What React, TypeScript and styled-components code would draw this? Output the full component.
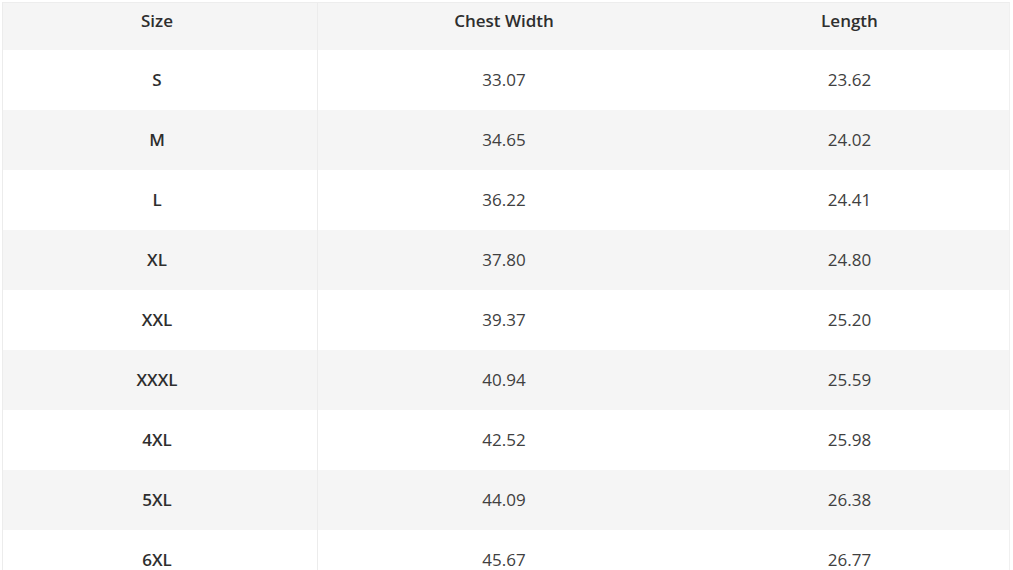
import styled, { createGlobalStyle } from 'styled-components';

const rows = [
  ['S', '33.07', '23.62'],
  ['M', '34.65', '24.02'],
  ['L', '36.22', '24.41'],
  ['XL', '37.80', '24.80'],
  ['XXL', '39.37', '25.20'],
  ['XXXL', '40.94', '25.59'],
  ['4XL', '42.52', '25.98'],
  ['5XL', '44.09', '26.38'],
  ['6XL', '45.67', '26.77'],
];

function App() {
  return (
    <>
      <GlobalStyle />
      <Page>
        <Table>
          <HeaderRow>
            <HeadCell>Size</HeadCell>
            <HeadCell>Chest Width</HeadCell>
            <HeadCell>Length</HeadCell>
          </HeaderRow>
          {rows.map(([size, chest, length], i) => (
            <Row key={size} $striped={i % 2 === 1}>
              <SizeCell>{size}</SizeCell>
              <Cell>{chest}</Cell>
              <Cell>{length}</Cell>
            </Row>
          ))}
        </Table>
      </Page>
    </>
  );
}

const GlobalStyle = createGlobalStyle`
  body {
    margin: 0;
    background: #fff;
    font-family: 'Open Sans', 'Liberation Sans', sans-serif;
    color: #3a3a3a;
    overflow: hidden;
  }
`;

const Page = styled.div`
  padding: 2px 3px 0 2px;
  height: 570px;
  box-sizing: border-box;
  overflow: hidden;
`;

const Table = styled.div`
  border-left: 1px solid #ececec;
  border-right: 1px solid #f0f0f0;
  border-top: 1px solid #ededed;
`;

const HeaderRow = styled.div`
  display: grid;
  grid-template-columns: 315px 372px 1fr;
  height: 47px;
  background: #f5f5f5;
`;

const HeadCell = styled.div`
  display: flex;
  align-items: center;
  justify-content: center;
  padding-bottom: 13px;
  font-size: 17px;
  font-weight: 600;
  color: #2e2e2e;

  &:first-child {
    padding-right: 6px;
    border-right: 1px solid #ececec;
  }
`;

const Row = styled.div<{ $striped: boolean }>`
  display: grid;
  grid-template-columns: 315px 372px 1fr;
  height: 60px;
  background: ${(p) => (p.$striped ? '#f5f5f5' : '#fff')};
`;

const Cell = styled.div`
  display: flex;
  align-items: center;
  justify-content: center;
  font-size: 17px;
  color: #404040;
  padding-bottom: 1px;
`;

const SizeCell = styled(Cell)`
  font-weight: 600;
  color: #2e2e2e;
  padding-right: 6px;
  border-right: 1px solid #ececec;
`;

export default App;
